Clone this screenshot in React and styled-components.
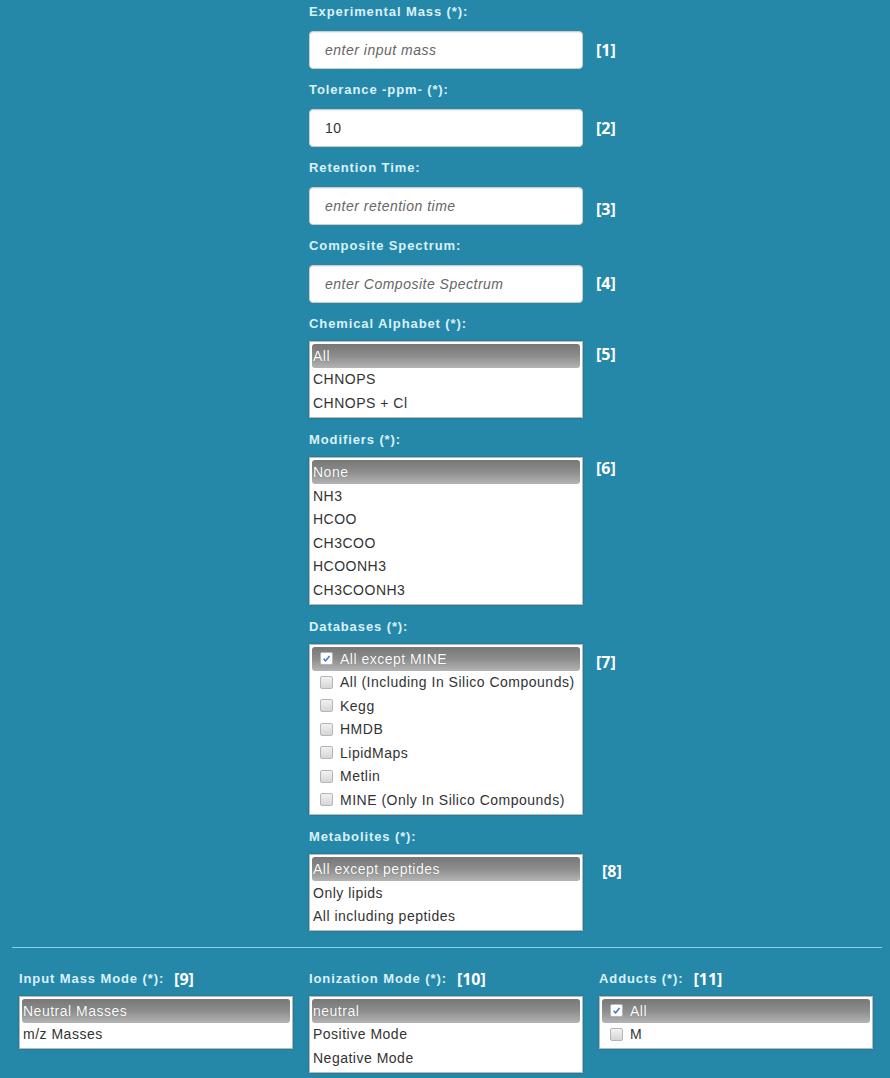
import React from 'react'
import styled, { createGlobalStyle } from 'styled-components'

const GlobalStyle = createGlobalStyle`
  html, body {
    margin: 0;
    padding: 0;
    background: #2688a9;
  }
  body {
    font-family: "Liberation Sans", Arial, sans-serif;
  }
`

const topFields = [
  { label: 'Experimental Mass (*):', tag: '[1]', input: 'enter input mass' },
  { label: 'Tolerance -ppm- (*):', tag: '[2]', value: '10' },
  { label: 'Retention Time:', tag: '[3]', input: 'enter retention time', tagTop: 11 },
  { label: 'Composite Spectrum:', tag: '[4]', input: 'enter Composite Spectrum', tagTop: 7 },
  { label: 'Chemical Alphabet (*):', tag: '[5]', tagTop: 2, options: ['All', 'CHNOPS', 'CHNOPS + Cl'] },
  { label: 'Modifiers (*):', tag: '[6]', tagTop: 0, options: ['None', 'NH3', 'HCOO', 'CH3COO', 'HCOONH3', 'CH3COONH3'] },
  {
    label: 'Databases (*):', tag: '[7]', tagTop: 7, check: true,
    options: ['All except MINE', 'All (Including In Silico Compounds)', 'Kegg', 'HMDB', 'LipidMaps', 'Metlin', 'MINE (Only In Silico Compounds)'],
  },
  { label: 'Metabolites (*):', tag: '[8]', tagTop: 6, tagLeft: 19, options: ['All except peptides', 'Only lipids', 'All including peptides'] },
]

const bottomFields = [
  { label: 'Input Mass Mode (*):', tag: '[9]', options: ['Neutral Masses', 'm/z Masses'] },
  { label: 'Ionization Mode (*):', tag: '[10]', options: ['neutral', 'Positive Mode', 'Negative Mode'] },
  { label: 'Adducts (*):', tag: '[11]', check: true, options: ['All', 'M'] },
]

function ListBox({ options, check }) {
  return (
    <Box>
      {options.map((opt, i) =>
        <Option key={i} $selected={i === 0} $check={check}>
          {check && <Check $on={i === 0}>{i === 0 &&
            <svg width="9" height="9" viewBox="0 0 9 9">
              <path d="M1.6 4.9 L3.6 6.9 L7.5 2" fill="none" stroke="#3b78d6" strokeWidth="1.5" />
            </svg>}
          </Check>}
          {opt}
        </Option>
      )}
    </Box>
  )
}

function App() {
  return (
    <Wrapper>
      <GlobalStyle />
      <TopColumn>
        {topFields.map((f, i) =>
          <Group key={i} $list={!!f.options}>
            <Label $tight={!!f.options}>{f.label}</Label>
            <FieldRow>
              {f.options
                ? <ListBox options={f.options} check={f.check} />
                : <TextInput placeholder={f.input} defaultValue={f.value} readOnly />}
              <Tag $top={f.tagTop} $left={f.tagLeft} $center={!f.options && f.tagTop === undefined}>{f.tag}</Tag>
            </FieldRow>
          </Group>
        )}
      </TopColumn>
      <Divider />
      <BottomRow>
        {bottomFields.map((f, i) =>
          <div key={i}>
            <Label $tight>{f.label}<InlineTag>{f.tag}</InlineTag></Label>
            <ListBox options={f.options} check={f.check} />
          </div>
        )}
      </BottomRow>
    </Wrapper>
  )
}

const Wrapper = styled.div`
  width: 890px;
  height: 1078px;
  overflow: hidden;
  padding-top: 3px;
  box-sizing: border-box;
`

const TopColumn = styled.div`
  margin-left: 309px;
  display: flex;
  flex-direction: column;
`

const Group = styled.div`
  display: flex;
  flex-direction: column;
  margin-bottom: ${p => p.$list ? 13.5 : 12}px;

  &:last-child {
    margin-bottom: 0;
  }
`

const Label = styled.div`
  color: #d9f1f9;
  font-size: 13px;
  font-weight: bold;
  letter-spacing: 0.9px;
  line-height: 18px;
  margin-bottom: ${p => p.$tight ? 8 : 10}px;
  display: flex;
  align-items: center;
`

const FieldRow = styled.div`
  display: flex;
  align-items: flex-start;
`

const Tag = styled.span`
  font-family: "Open Sans", sans-serif;
  font-weight: bold;
  font-size: 16px;
  color: #fff;
  line-height: 22px;
  padding-left: ${p => p.$left ?? 13}px;
  align-self: ${p => p.$center ? 'center' : 'flex-start'};
  margin-top: ${p => p.$top ?? 0}px;
`

const InlineTag = styled.span`
  font-family: "Open Sans", sans-serif;
  font-weight: bold;
  font-size: 16px;
  letter-spacing: 0;
  line-height: 18px;
  color: #fff;
  margin-left: 10px;
`

const TextInput = styled.input`
  width: 274px;
  height: 38px;
  box-sizing: border-box;
  border: 1px solid #ccc;
  border-radius: 4px;
  box-shadow: inset 0 1px 1px rgba(0, 0, 0, 0.075);
  padding: 6px 15px;
  font-family: "Liberation Sans", Arial, sans-serif;
  font-size: 14px;
  letter-spacing: 0.5px;
  color: #333;
  outline: none;
  background: #fff;

  &::placeholder {
    color: #666;
    font-style: italic;
  }
`

const Box = styled.div`
  width: 274px;
  box-sizing: border-box;
  background: #fff;
  border: 1px solid #b9b9b9;
  box-shadow: 0 0 2px rgba(0, 0, 0, 0.25);
  padding: 2px 2px 2.25px;
`

const Option = styled.div`
  height: 23.5px;
  display: flex;
  align-items: center;
  font-size: 14px;
  letter-spacing: 0.5px;
  padding-left: ${p => p.$check ? '8px' : '1px'};
  border-radius: 3px;
  color: ${p => p.$selected ? '#fff' : '#333'};
  background: ${p => p.$selected ? 'linear-gradient(#777 0%, #8d8d8d 50%, #b4b4b4 100%)' : 'transparent'};
  text-shadow: ${p => p.$selected ? '0 0 1px rgba(0,0,0,0.4)' : 'none'};
  white-space: nowrap;
`

const Check = styled.span`
  width: 11px;
  height: 11px;
  margin-right: 7px;
  border: 1px solid #b5b5b5;
  border-radius: 2px;
  background: ${p => p.$on ? '#fff' : 'linear-gradient(#f2f2f2, #d6d6d6)'};
  display: flex;
  align-items: center;
  justify-content: center;
`

const Divider = styled.hr`
  margin: 16px 8px 0 12px;
  border: none;
  border-top: 1px solid #7fd1ef;
`

const BottomRow = styled.div`
  display: grid;
  grid-template-columns: repeat(3, 274px);
  column-gap: 16px;
  padding-left: 19px;
  margin-top: 22px;
`

export default App
